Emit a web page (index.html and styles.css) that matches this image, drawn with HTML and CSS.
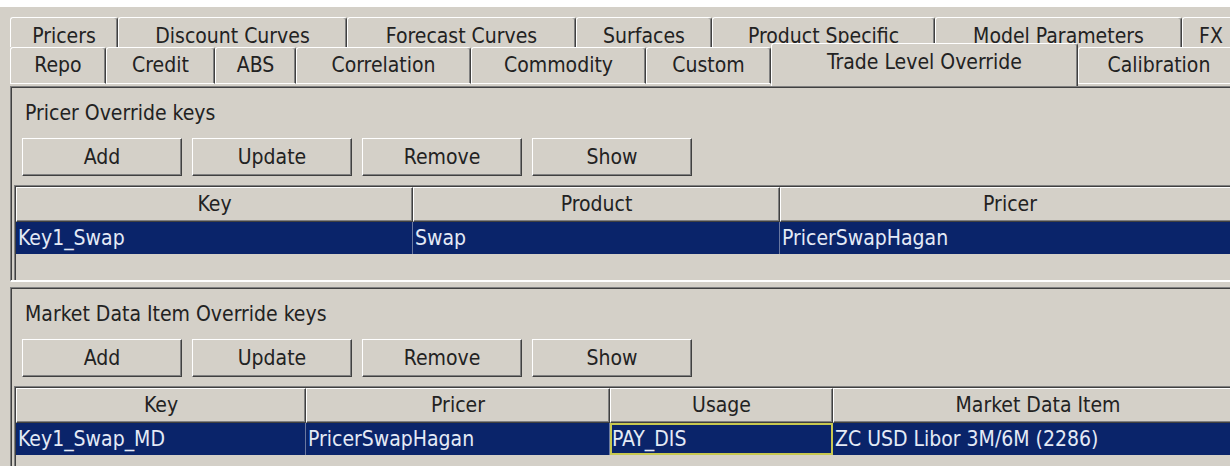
FILE: index.html
```html
<!DOCTYPE html>
<html lang="en">
<head>
<meta charset="utf-8">
<title>Pricing Environment – Trade Level Override</title>
<link rel="stylesheet" href="styles.css">
</head>
<body>
<div class="topbar"></div>

<div class="tabstrip">
  <div class="tabrow back">
    <div class="tab">Pricers</div>
    <div class="tab">Discount Curves</div>
    <div class="tab">Forecast Curves</div>
    <div class="tab">Surfaces</div>
    <div class="tab">Product Specific</div>
    <div class="tab">Model Parameters</div>
    <div class="tab">FX</div>
  </div>
  <div class="tabrow front">
    <div class="tab">Repo</div>
    <div class="tab">Credit</div>
    <div class="tab">ABS</div>
    <div class="tab">Correlation</div>
    <div class="tab">Commodity</div>
    <div class="tab">Custom</div>
    <div class="tab selected">Trade Level Override</div>
    <div class="tab">Calibration</div>
  </div>
</div>

<div class="tabpage">
  <section class="pane pane-top">
    <div class="pane-title">Pricer Override keys</div>
    <div class="buttons">
      <button class="btn">Add</button>
      <button class="btn">Update</button>
      <button class="btn">Remove</button>
      <button class="btn">Show</button>
    </div>
    <div class="viewport">
      <div class="grid cols-pricer">
        <div class="hcell">Key</div>
        <div class="hcell">Product</div>
        <div class="hcell">Pricer</div>
      </div>
      <div class="grid cols-pricer row selected">
        <div class="cell">Key1_Swap</div>
        <div class="cell">Swap</div>
        <div class="cell">PricerSwapHagan</div>
      </div>
    </div>
  </section>

  <div class="splitter"></div>

  <section class="pane pane-bottom">
    <div class="pane-title">Market Data Item Override keys</div>
    <div class="buttons">
      <button class="btn">Add</button>
      <button class="btn">Update</button>
      <button class="btn">Remove</button>
      <button class="btn">Show</button>
    </div>
    <div class="viewport">
      <div class="grid cols-md">
        <div class="hcell">Key</div>
        <div class="hcell">Pricer</div>
        <div class="hcell">Usage</div>
        <div class="hcell">Market Data Item</div>
      </div>
      <div class="grid cols-md row selected">
        <div class="cell">Key1_Swap_MD</div>
        <div class="cell">PricerSwapHagan</div>
        <div class="cell focused">PAY_DIS</div>
        <div class="cell">ZC USD Libor 3M/6M (2286)</div>
      </div>
    </div>
  </section>
</div>
</body>
</html>
```

FILE: styles.css
```css
* {
  box-sizing: border-box;
}

html,
body {
  margin: 0;
  padding: 0;
}

body {
  width: 1230px;
  height: 466px;
  overflow: hidden;
  background: #d4d0c8;
  color: #222;
  font-family: "DejaVu Sans Condensed", "DejaVu Sans", sans-serif;
  font-size: 21px;
}

.topbar {
  height: 7px;
  background: #fff;
}

/* ---------- tab strip (two stacked rows) ---------- */

.tabstrip {
  padding: 10px 0 0 10px;
  white-space: nowrap;
}

.tabrow {
  display: grid;
  align-items: start;
}

.tabrow.back {
  height: 30px;
  grid-template-columns: 108px 229px 229px 136px 223px 247px 58px;
}

.tabrow.front {
  height: 37px;
  grid-template-columns: 96px 109px 81px 175px 175px 125px 307px 162px;
}

.tab {
  background: #d4d0c8;
  border-top: 1px solid #fff;
  border-left: 1px solid #fff;
  border-right: 1px solid #404040;
  border-radius: 3px 3px 0 0;
  box-shadow: inset -1px 0 0 #808080;
  text-align: center;
}

.back .tab {
  height: 30px;
  padding-top: 8px;
  line-height: 20px;
}

.front .tab {
  height: 37px;
  line-height: 35px;
  border-bottom: 1px solid #fff;
  overflow: hidden;
}

.front .tab.selected {
  margin-top: -4px;
  height: 43px;
  line-height: 37px;
  border-bottom: 0;
  z-index: 1;
}

/* ---------- tab page with two split panes ---------- */

.tabpage {
  padding: 2px 0 0 10px;
}

.pane {
  display: flex;
  flex-direction: column;
  border-left: 1px solid #808080;
  border-top: 1px solid #808080;
  box-shadow: inset 1px 1px 0 #404040;
  padding-left: 1px;
  padding-top: 1px;
}

.pane-top {
  height: 196px;
  border-bottom: 2px solid #fff;
}

.pane-bottom {
  height: 190px;
}

.splitter {
  height: 5px;
}

.pane-title {
  margin-top: 13px;
  padding-left: 13px;
  line-height: 24px;
}

.buttons {
  display: flex;
  gap: 10px;
  margin: 13px 0 0 10px;
}

.btn {
  width: 160px;
  height: 38px;
  padding: 0;
  background: #d4d0c8;
  color: #222;
  font: inherit;
  line-height: 34px;
  border-top: 1px solid #fff;
  border-left: 1px solid #fff;
  border-right: 1px solid #404040;
  border-bottom: 1px solid #404040;
  box-shadow: inset -1px -1px 0 #808080;
  border-radius: 0;
}

/* ---------- table viewport ---------- */

.viewport {
  flex: 1;
  margin: 9px 0 0 2px;
  border-left: 1px solid #808080;
  border-top: 1px solid #808080;
  box-shadow: inset 1px 1px 0 #404040;
  padding: 1px 0 0 1px;
  overflow: hidden;
}

.grid {
  display: grid;
  white-space: nowrap;
}

.cols-pricer {
  grid-template-columns: 397px 367px 460px;
}

.cols-md {
  grid-template-columns: 290px 304px 223px 410px;
}

.hcell {
  height: 35px;
  line-height: 33px;
  text-align: center;
  color: #222;
  border-top: 1px solid #fff;
  border-left: 1px solid #fff;
  border-right: 1px solid #404040;
  border-bottom: 1px solid #404040;
  box-shadow: inset -1px -1px 0 #808080;
}

.row.selected {
  background: #0a246a;
  color: #e4eaf6;
}

.cell {
  height: 32px;
  line-height: 32px;
  padding-left: 2px;
  border-right: 1px solid #6a78a0;
  overflow: hidden;
}

.cell.focused {
  padding-left: 0;
  border: 2px solid #c8c850;
  line-height: 28px;
}
```
